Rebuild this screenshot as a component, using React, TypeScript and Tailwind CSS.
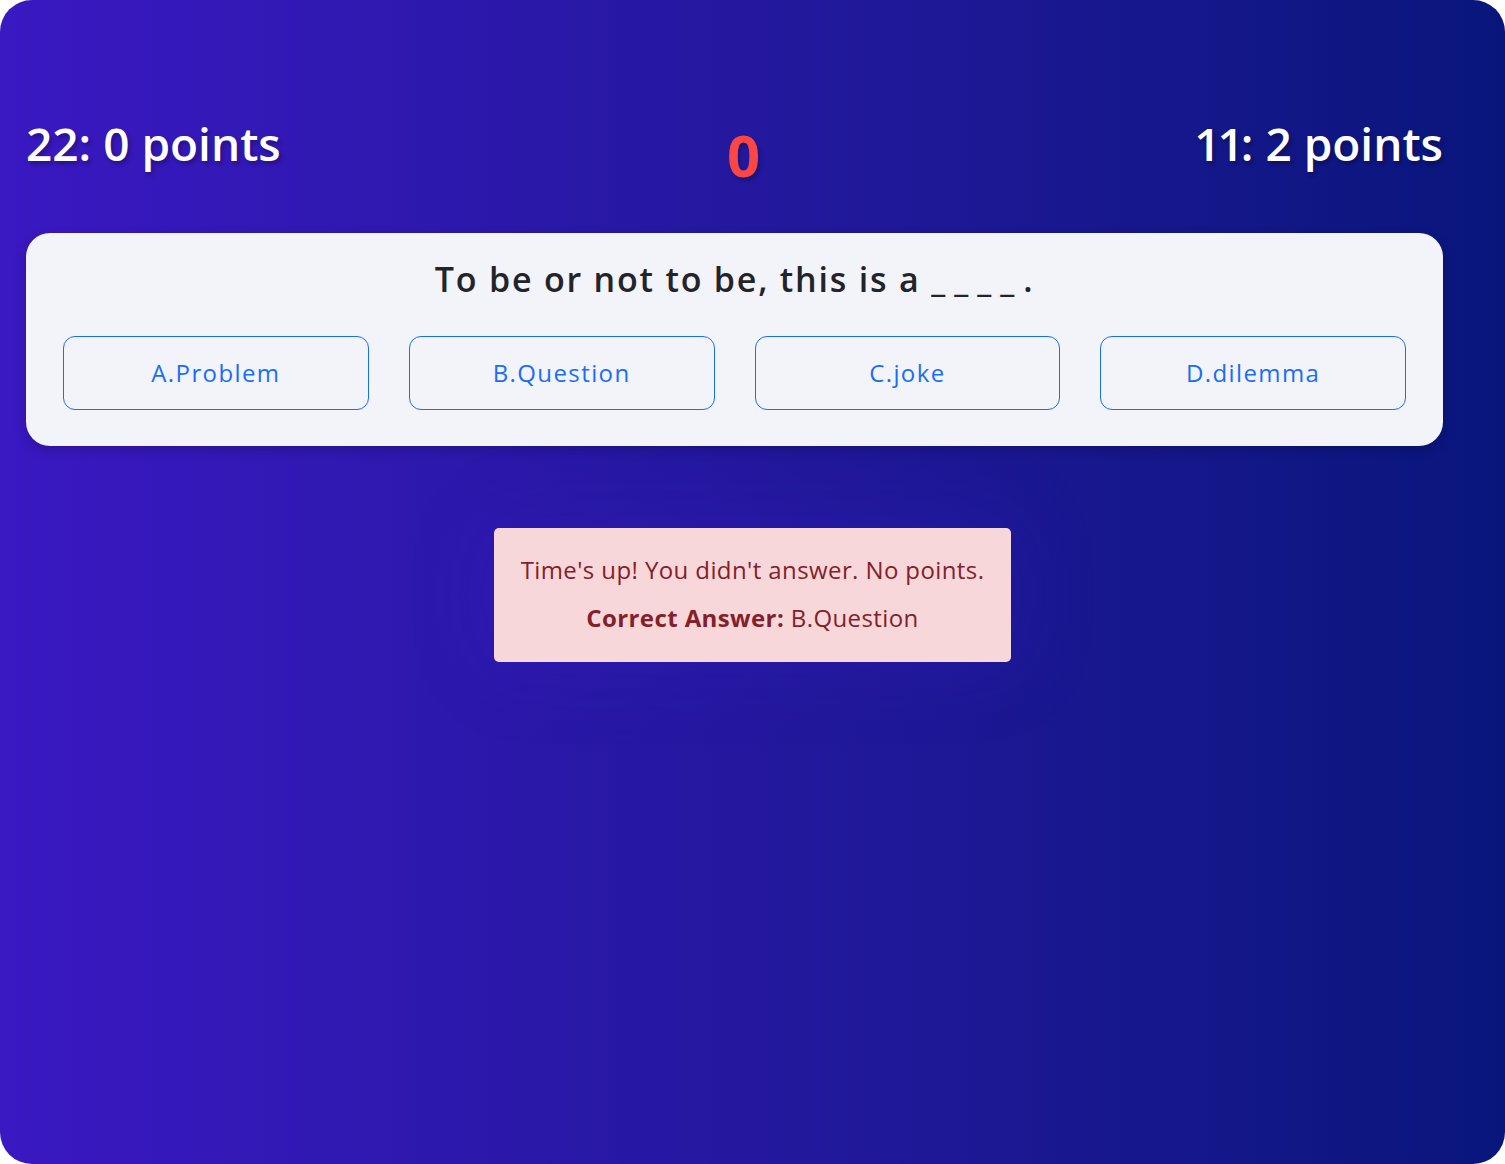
export default function App() {
  const options = ['A.Problem', 'B.Question', 'C.joke', 'D.dilemma'];

  return (
    <div className="bg-white min-h-screen font-['Open_Sans',sans-serif]">
      <div className="min-h-screen rounded-[32px] bg-gradient-to-r from-[#3a18c2] to-[#08167c] pl-[26px] pr-[62px] pt-[106px]">
        {/* Scoreboard */}
        <div className="flex items-start justify-between">
          <div className="text-[46px] leading-[74px] font-semibold text-white [text-shadow:2px_3px_4px_rgba(0,0,0,0.3)]">
            22: 0 points
          </div>
          <div className="ml-[12px] pt-[12px] text-[58px] leading-[74px] font-bold text-[#fb4646] [text-shadow:2px_3px_4px_rgba(0,0,0,0.25)]">
            0
          </div>
          <div className="text-[46px] leading-[74px] font-semibold text-white [text-shadow:2px_3px_4px_rgba(0,0,0,0.3)]">
            <span className="tracking-[-3px]">11</span>: 2 points
          </div>
        </div>

        {/* Question card */}
        <div className="mt-[41px] rounded-[24px] bg-[#f3f3fa] px-[37px] pt-[22px] pb-[36px] shadow-[0_4px_12px_rgba(0,0,0,0.2)]">
          <h2 className="text-center text-[34px] leading-[48px] font-semibold tracking-[1.8px] text-[#23232a]">
            To be or not to be, this is a <span className="font-bold tracking-[9px]">____</span>.
          </h2>
          <div className="mt-[33px] grid grid-cols-4 gap-[40px]">
            {options.map((o) => (
              <button
                key={o}
                className="h-[74px] rounded-[12px] border border-[#1a6ef5] text-[24px] font-medium tracking-[1.4px] text-[#1a6ef5]"
              >
                {o}
              </button>
            ))}
          </div>
        </div>

        {/* Feedback */}
        <div className="mt-[82px] flex justify-center pl-[36px]">
          <div className="w-[517px] rounded-[5px] bg-[#f8d7da] px-4 pt-[24px] pb-[26px] text-center text-[#842029] text-[24px] leading-[36px] tracking-[0.4px] shadow-[0_0_80px_rgba(60,30,200,0.25)]">
            <p>Time's up! You didn't answer. No points.</p>
            <p className="mt-[12px]">
              <span className="font-bold">Correct Answer:</span> B.Question
            </p>
          </div>
        </div>
      </div>
    </div>
  );
}
